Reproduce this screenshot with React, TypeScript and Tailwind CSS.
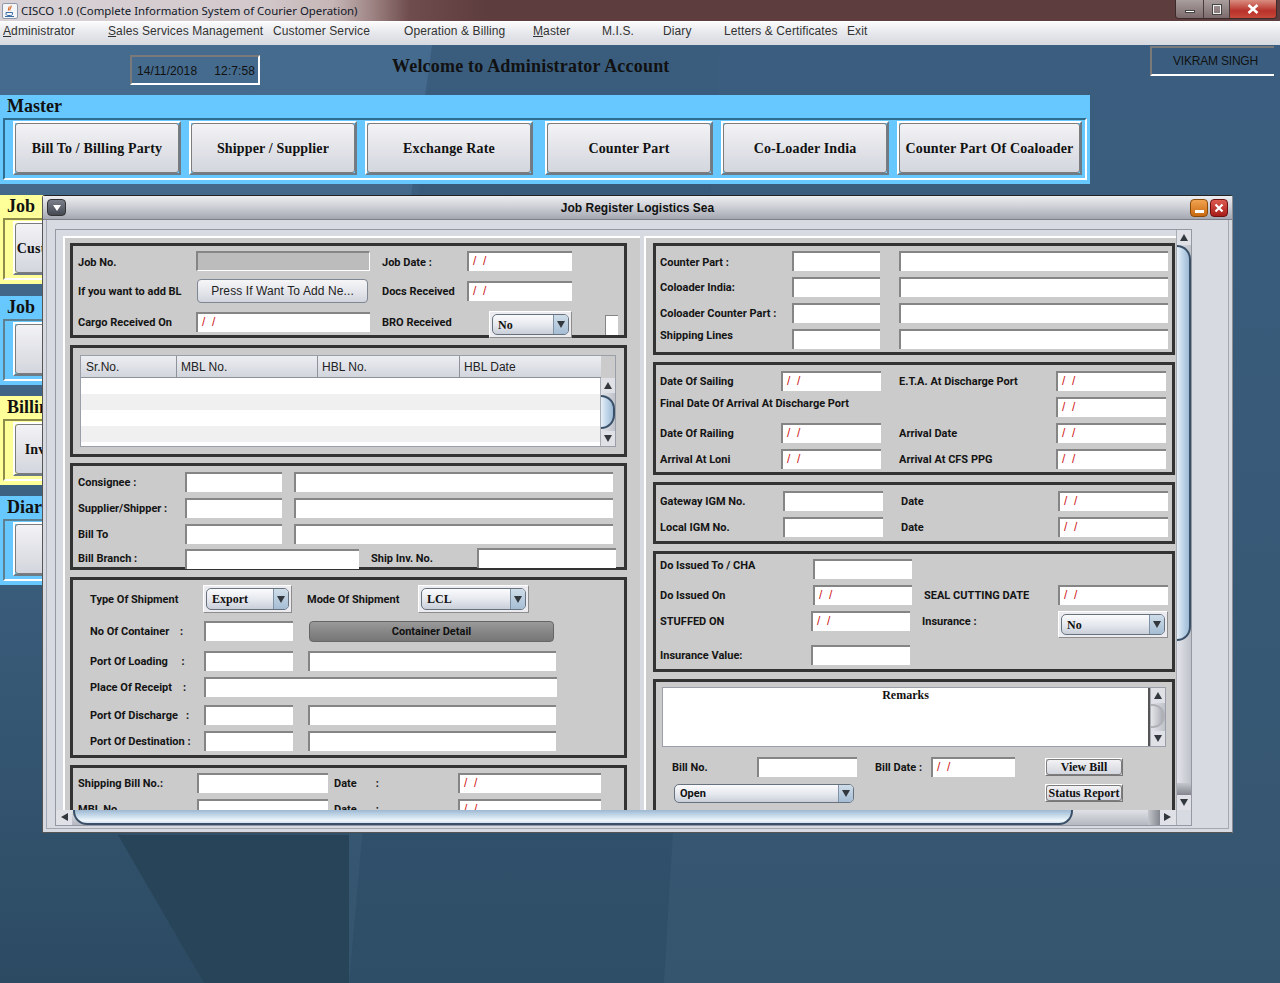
// CISCO 1.0 - Job Register Logistics Sea
import type { ReactNode } from 'react'

const chrome = "font-['Liberation_Sans',Arial,sans-serif]"
const serif = "font-['Liberation_Serif','Times_New_Roman',serif]"

function Tri({ dir = 'down', className = '' }: { dir?: 'up' | 'down' | 'left' | 'right'; className?: string }) {
  const pts = { up: '4,1 8,8 0,8', down: '0,1 8,1 4,8', left: '8,0 8,8 1,4', right: '0,0 0,8 7,4' }[dir]
  return (
    <svg viewBox="0 0 8 9" className={`w-[8px] h-[9px] ${className}`}>
      <polygon points={pts} fill="#33383f" />
    </svg>
  )
}

function Label({ className = '', children }: { className?: string; children: ReactNode }) {
  return (
    <div className={`shrink-0 h-[20px] pt-[1px] leading-[20px] whitespace-pre overflow-visible font-['Roboto',sans-serif] font-bold text-[11px] text-[#141414] ${className}`}>
      {children}
    </div>
  )
}

function Field({ className = '', date = false, grey = false }: { className?: string; date?: boolean; grey?: boolean }) {
  return (
    <div className={`shrink-0 h-[20px] border-t-2 border-l-2 border-t-[#858585] border-l-[#858585] pl-[4px] leading-[17px] whitespace-pre text-[12px] text-[#d01818] ${chrome} ${grey ? 'bg-[#bcbcbc] border-r border-b border-r-white border-b-white' : 'bg-white'} ${className}`}>
      {date ? '/  /' : ''}
    </div>
  )
}

function Select({ className = '', value }: { className?: string; value: string }) {
  return (
    <div className={`shrink-0 p-[2px] border border-t-white border-l-white border-r-[#8d8d8d] border-b-[#8d8d8d] bg-[#ececf0] ${className}`}>
      <div className="h-full flex rounded-[5px] border border-[#67727f] overflow-hidden bg-[linear-gradient(180deg,#fbfbfd_0%,#e4e7ed_55%,#c9ced8_100%)]">
        <div className={`flex-1 pl-[5px] self-center ${serif} text-[12px] font-bold text-[#111]`}>{value}</div>
        <div className="w-[15px] flex items-center justify-center border-l border-[#7f93a8] bg-[linear-gradient(180deg,#cfdde9_0%,#a5bdd4_100%)]">
          <Tri />
        </div>
      </div>
    </div>
  )
}

function SmallSelect({ className = '', value }: { className?: string; value: string }) {
  return (
    <div className={`shrink-0 flex rounded-[5px] border border-[#67727f] overflow-hidden bg-[linear-gradient(180deg,#fbfbfd_0%,#e4e7ed_55%,#c9ced8_100%)] ${className}`}>
      <div className="flex-1 pl-[5px] pt-[1px] self-center font-['Roboto',sans-serif] text-[11px] font-bold text-[#111]">{value}</div>
      <div className="w-[15px] flex items-center justify-center border-l border-[#7f93a8] bg-[linear-gradient(180deg,#cfdde9_0%,#a5bdd4_100%)]">
        <Tri />
      </div>
    </div>
  )
}

function Panel({ className = '', children }: { className?: string; children: ReactNode }) {
  return <div className={`shrink-0 border-[3px] border-[#333] bg-[#cbcbcb] ${className}`}>{children}</div>
}

function Row({ className = '', children }: { className?: string; children: ReactNode }) {
  return <div className={`flex items-start h-[20px] ${className}`}>{children}</div>
}

const blueThumb = 'border-[#3a5068] bg-[linear-gradient(90deg,#e6eff7_0%,#bcd2e6_55%,#9dbad4_100%)]'
const greyThumb = 'border-[#b0b2b8] bg-[linear-gradient(90deg,#e4e5e9_0%,#c4c6cc_60%,#a8aab1_100%)]'

function VScroll({ className = '', thumb, shade = false }: { className?: string; thumb: string; shade?: boolean }) {
  return (
    <div className={`shrink-0 w-[15px] flex flex-col bg-[linear-gradient(90deg,#e2e4ea_0%,#bfc2c9_100%)] border-l border-[#a9adb6] ${className}`}>
      <div className="h-[15px] flex items-center justify-center bg-[#dfe1e7]"><Tri dir="up" /></div>
      <div className={`shrink-0 rounded-r-[14px] border-r-2 border-t-2 border-b-2 ${thumb}`} />
      <div className="flex-1" />
      {shade && <div className="h-[12px] bg-[linear-gradient(180deg,#c4c6cc_0%,#83868e_100%)]" />}
      <div className="h-[15px] flex items-center justify-center bg-[#dfe1e7]"><Tri /></div>
    </div>
  )
}

function FaceButton({ children }: { children: ReactNode }) {
  return (
    <div className="h-full rounded-[3px] border border-[#7c7c7c] flex items-center justify-center bg-[linear-gradient(180deg,#f3f3f6_0%,#e3e4e9_50%,#d3d6de_100%)]">
      {children}
    </div>
  )
}

function BigButton({ className = '', children }: { className?: string; children: ReactNode }) {
  return (
    <div className={`shrink-0 h-[54px] border-2 border-t-white border-l-white border-r-[#6e7a86] border-b-[#6e7a86] ${serif} font-bold text-[14px] tracking-[0.15px] text-[#111] whitespace-nowrap ${className}`}>
      <FaceButton>{children}</FaceButton>
    </div>
  )
}

function SideGroup({ title, button, yellow = false, className = '' }: { title: string; button: string; yellow?: boolean; className?: string }) {
  return (
    <div className={`w-[400px] h-[89px] flex flex-col ${yellow ? 'bg-[#ffff99]' : 'bg-[#66c8ff]'} ${className}`}>
      <div className={`h-[23px] pl-[7px] leading-[23px] ${serif} font-bold text-[18px] text-[#111]`}>{title}</div>
      <div className={`mx-[3px] h-[62px] border-2 border-t-[#5d7f8f] border-l-[#5d7f8f] border-r-white border-b-white pl-[8px] pt-[1px] ${yellow ? 'border-t-[#8c8c4a] border-l-[#8c8c4a]' : ''}`}>
        <BigButton className="w-[68px]">{button}</BigButton>
      </div>
    </div>
  )
}

const menu = [
  { text: 'Administrator', u: true, cls: 'w-[105px]' },
  { text: 'Sales Services Management', u: true, cls: 'w-[165px]' },
  { text: 'Customer Service', u: false, cls: 'w-[131px]' },
  { text: 'Operation & Billing', u: false, cls: 'w-[129px]' },
  { text: 'Master', u: true, cls: 'w-[69px]' },
  { text: 'M.I.S.', u: false, cls: 'w-[61px]' },
  { text: 'Diary', u: false, cls: 'w-[61px]' },
  { text: 'Letters & Certificates', u: false, cls: 'w-[123px]' },
  { text: 'Exit', u: false, cls: 'w-[40px]' },
]

function LeftColumn() {
  return (
    <div className="w-[577px] shrink-0 border-l-2 border-t-2 border-white bg-[#cbcbcb] pl-[5px] pt-[5px]">
      <Panel className="w-[557px] h-[95px] pl-[5px] pt-[5px]">
        <Row>
          <Label className="w-[118px] mt-[1px]">Job No.</Label>
          <Field grey className="w-[174px]" />
          <Label className="ml-[12px] w-[85px] mt-[1px]">Job Date :</Label>
          <Field date className="w-[105px]" />
        </Row>
        <div className="flex items-center h-[24px] mt-[8px]">
          <Label className="w-[119px]">If you want to add BL</Label>
          <div className={`w-[171px] h-[24px] rounded-[4px] border border-[#7f8792] flex items-center justify-center text-[12px] tracking-[0.1px] text-[#222] ${chrome} bg-[linear-gradient(180deg,#f6f6f8_0%,#e6e7ec_50%,#d2d5dd_100%)]`}>
            Press If Want To Add Ne...
          </div>
          <Label className="ml-[14px] w-[85px]">Docs Received</Label>
          <Field date className="w-[105px]" />
        </div>
        <Row className="mt-[8px]">
          <Label className="w-[118px] mt-[1px]">Cargo Received On</Label>
          <Field date className="w-[174px] mt-[1px]" />
          <Label className="ml-[12px] w-[107px] mt-[1px]">BRO Received</Label>
          <Select value="No" className="w-[83px] h-[27px]" />
          <div className="ml-[33px] mt-[4px] w-[13px] h-[20px] bg-white border-t border-l border-[#858585]" />
        </Row>
      </Panel>

      <Panel className="mt-[7px] w-[557px] h-[112px] pl-[7px] pt-[7px]">
        <div className="w-[536px] h-[92px] border border-[#9a9ea8] flex flex-col">
          <div className={`h-[22px] shrink-0 flex text-[12px] text-[#222] ${chrome}`}>
            <div className="w-[96px] pl-[5px] leading-[23px] border-r border-b border-[#8e929b] bg-[linear-gradient(180deg,#eceef2_0%,#d2d5dc_100%)]">Sr.No.</div>
            <div className="w-[141px] pl-[4px] leading-[23px] border-r border-b border-[#8e929b] bg-[linear-gradient(180deg,#eceef2_0%,#d2d5dc_100%)]">MBL No.</div>
            <div className="w-[142px] pl-[4px] leading-[23px] border-r border-b border-[#8e929b] bg-[linear-gradient(180deg,#eceef2_0%,#d2d5dc_100%)]">HBL No.</div>
            <div className="w-[141px] pl-[4px] leading-[23px] border-b border-[#8e929b] bg-[linear-gradient(180deg,#eceef2_0%,#d2d5dc_100%)]">HBL Date</div>
            <div className="flex-1 bg-[#cbcbcb]" />
          </div>
          <div className="flex flex-1 min-h-0">
            <div className="flex-1 bg-white">
              <div className="h-[16px]" />
              <div className="h-[16px] bg-[#f0f0f0]" />
              <div className="h-[16px]" />
              <div className="h-[16px] bg-[#f0f0f0]" />
            </div>
            <VScroll thumb={`h-[34px] mt-[2px] ${blueThumb}`} />
          </div>
        </div>
      </Panel>

      <Panel className="mt-[6px] w-[557px] h-[107px] pl-[5px] pt-[6px]">
        <Row>
          <Label className="w-[107px]">Consignee :</Label>
          <Field className="w-[97px]" />
          <Field className="ml-[12px] w-[319px]" />
        </Row>
        <Row className="mt-[6px]">
          <Label className="w-[107px]">Supplier/Shipper :</Label>
          <Field className="w-[97px]" />
          <Field className="ml-[12px] w-[319px]" />
        </Row>
        <Row className="mt-[6px]">
          <Label className="w-[107px]">Bill To</Label>
          <Field className="w-[97px]" />
          <Field className="ml-[12px] w-[319px]" />
        </Row>
        <Row className="mt-[5px]">
          <Label className="w-[107px] -mt-[1px] mb-[1px]">Bill Branch :</Label>
          <Field className="w-[174px]" />
          <Label className="ml-[12px] w-[106px] -mt-[1px] mb-[1px]">Ship Inv. No.</Label>
          <Field className="w-[139px] -mt-[1px]" />
        </Row>
      </Panel>

      <Panel className="mt-[7px] w-[557px] h-[181px] pl-[17px] pt-[5px]">
        <div className="flex items-center h-[28px]">
          <Label className="w-[113px]">Type Of Shipment</Label>
          <Select value="Export" className="w-[89px] h-[28px]" />
          <Label className="ml-[15px] w-[111px]">Mode Of Shipment</Label>
          <Select value="LCL" className="w-[111px] h-[28px]" />
        </div>
        <Row className="mt-[8px]">
          <Label className="w-[114px]">{'No Of Container    :'}</Label>
          <Field className="w-[89px]" />
          <div className="ml-[16px] w-[245px] h-[21px] pt-[1px] rounded-[4px] border border-[#666] flex items-center justify-center font-['Roboto',sans-serif] font-bold text-[11px] text-[#111] bg-[linear-gradient(180deg,#9a9a9a_0%,#838383_60%,#777_100%)]">
            Container Detail
          </div>
        </Row>
        <Row className="mt-[10px]">
          <Label className="w-[114px]">{'Port Of Loading     :'}</Label>
          <Field className="w-[89px]" />
          <Field className="ml-[15px] w-[248px]" />
        </Row>
        <Row className="mt-[6px]">
          <Label className="w-[114px]">{'Place Of Receipt    :'}</Label>
          <Field className="w-[353px]" />
        </Row>
        <Row className="mt-[8px]">
          <Label className="w-[114px]">{'Port Of Discharge   :'}</Label>
          <Field className="w-[89px]" />
          <Field className="ml-[15px] w-[248px]" />
        </Row>
        <Row className="mt-[6px]">
          <Label className="w-[114px]">Port Of Destination :</Label>
          <Field className="w-[89px]" />
          <Field className="ml-[15px] w-[248px]" />
        </Row>
      </Panel>

      <Panel className="mt-[7px] w-[557px] h-[90px] pl-[5px] pt-[5px]">
        <Row>
          <Label className="w-[119px]">Shipping Bill No.:</Label>
          <Field className="w-[131px]" />
          <Label className="ml-[6px] w-[124px]">{'Date       :'}</Label>
          <Field date className="w-[143px]" />
        </Row>
        <Row className="mt-[6px]">
          <Label className="w-[119px]">MBL No.</Label>
          <Field className="w-[131px]" />
          <Label className="ml-[6px] w-[124px]">{'Date       :'}</Label>
          <Field date className="w-[143px]" />
        </Row>
      </Panel>
    </div>
  )
}

function RightColumn() {
  return (
    <div className="ml-[4px] flex-1 border-l-2 border-t-2 border-white bg-[#cbcbcb] pl-[7px] pt-[5px]">
      <Panel className="w-[522px] h-[112px] pl-[4px] pt-[5px]">
        <Row>
          <Label className="w-[132px] mt-[1px]">Counter Part :</Label>
          <Field className="w-[88px]" />
          <Field className="ml-[19px] w-[269px]" />
        </Row>
        <Row className="mt-[6px]">
          <Label className="w-[132px]">Coloader India:</Label>
          <Field className="w-[88px]" />
          <Field className="ml-[19px] w-[269px]" />
        </Row>
        <Row className="mt-[6px]">
          <Label className="w-[132px]">Coloader Counter Part :</Label>
          <Field className="w-[88px]" />
          <Field className="ml-[19px] w-[269px]" />
        </Row>
        <Row className="mt-[6px]">
          <Label className="w-[132px] -mt-[4px] mb-[4px]">Shipping Lines</Label>
          <Field className="w-[88px]" />
          <Field className="ml-[19px] w-[269px]" />
        </Row>
      </Panel>

      <Panel className="mt-[7px] w-[522px] h-[113px] pl-[4px] pt-[6px]">
        <Row>
          <Label className="w-[121px]">Date Of Sailing</Label>
          <Field date className="w-[100px]" />
          <Label className="ml-[18px] w-[157px]">E.T.A. At Discharge Port</Label>
          <Field date className="w-[110px]" />
        </Row>
        <Row className="mt-[6px]">
          <Label className="w-[396px] -mt-[4px]">Final Date Of Arrival At Discharge Port</Label>
          <Field date className="w-[110px]" />
        </Row>
        <Row className="mt-[6px]">
          <Label className="w-[121px]">Date Of Railing</Label>
          <Field date className="w-[100px]" />
          <Label className="ml-[18px] w-[157px]">Arrival Date</Label>
          <Field date className="w-[110px]" />
        </Row>
        <Row className="mt-[6px]">
          <Label className="w-[121px]">Arrival At Loni</Label>
          <Field date className="w-[100px]" />
          <Label className="ml-[18px] w-[157px]">Arrival At CFS PPG</Label>
          <Field date className="w-[110px]" />
        </Row>
      </Panel>

      <Panel className="mt-[7px] w-[522px] h-[62px] pl-[4px] pt-[6px]">
        <Row>
          <Label className="w-[123px]">Gateway IGM No.</Label>
          <Field className="w-[100px]" />
          <Label className="ml-[18px] w-[157px]">Date</Label>
          <Field date className="w-[110px]" />
        </Row>
        <Row className="mt-[6px]">
          <Label className="w-[123px]">Local IGM No.</Label>
          <Field className="w-[100px]" />
          <Label className="ml-[18px] w-[157px]">Date</Label>
          <Field date className="w-[110px]" />
        </Row>
      </Panel>

      <Panel className="mt-[7px] w-[522px] h-[121px] pl-[4px] pt-[5px]">
        <Row>
          <Label className="w-[153px] -mt-[4px]">Do Issued To / CHA</Label>
          <Field className="w-[99px]" />
        </Row>
        <Row className="mt-[6px]">
          <Label className="w-[153px]">Do Issued On</Label>
          <Field date className="w-[99px]" />
          <Label className="ml-[12px] w-[134px]">SEAL CUTTING DATE</Label>
          <Field date className="w-[110px]" />
        </Row>
        <Row className="mt-[6px]">
          <Label className="w-[151px]">STUFFED ON</Label>
          <Field date className="w-[99px]" />
          <Label className="ml-[12px] w-[136px]">Insurance :</Label>
          <Select value="No" className="w-[110px] h-[27px]" />
        </Row>
        <Row className="mt-[14px]">
          <Label className="w-[151px]">Insurance Value:</Label>
          <Field className="w-[99px]" />
        </Row>
      </Panel>

      <Panel className="mt-[7px] w-[522px] h-[150px] pl-[6px] pt-[5px]">
        <div className="w-[504px] h-[60px] border border-[#9a9ea8] bg-white flex">
          <div className={`flex-1 border-r-2 border-[#555] text-center ${serif} font-bold text-[12px] leading-[14px] text-[#111]`}>Remarks</div>
          <VScroll thumb={`h-[24px] mt-[1px] ${greyThumb}`} />
        </div>
        <Row className="mt-[10px]">
          <Label className="ml-[10px] w-[85px]">Bill No.</Label>
          <Field className="w-[100px]" />
          <Label className="ml-[18px] w-[56px]">Bill Date :</Label>
          <Field date className="w-[84px]" />
          <div className={`ml-[30px] mt-[1px] w-[78px] h-[18px] border border-t-white border-l-white border-r-[#777] border-b-[#777] ${serif} font-bold text-[12px] text-[#111]`}>
            <FaceButton>View Bill</FaceButton>
          </div>
        </Row>
        <Row className="mt-[7px]">
          <SmallSelect value="Open" className="ml-[12px] w-[180px] h-[19px]" />
          <div className={`ml-[191px] w-[78px] h-[18px] border border-t-white border-l-white border-r-[#777] border-b-[#777] ${serif} font-bold text-[12px] text-[#111] whitespace-nowrap`}>
            <FaceButton>Status Report</FaceButton>
          </div>
        </Row>
      </Panel>
    </div>
  )
}

function InternalWindow() {
  return (
    <div className="absolute z-10 left-[42px] top-[150px] w-[1191px] h-[638px] flex flex-col border border-[#555] border-t-[#222] border-r-[#8a8d95] border-b-[#555] bg-[#d7dae1] rounded-t-[3px]">
      <div className="h-[24px] shrink-0 flex items-center pl-[4px] pr-[4px] border-b border-[#7d8089] bg-[linear-gradient(180deg,#eceef1_0%,#c8cad1_55%,#a4a7b1_100%)]">
        <div className="w-[19px] h-[17px] rounded-[4px] border border-[#333] bg-[linear-gradient(180deg,#7b7f8a_0%,#454954_100%)] flex items-center justify-center">
          <svg viewBox="0 0 8 6" className="w-[8px] h-[6px]"><polygon points="0,0 8,0 4,6" fill="#fff" /></svg>
        </div>
        <div className={`flex-1 text-center pl-[19px] ${chrome} font-bold text-[12px] text-[#111]`}>Job Register Logistics Sea</div>
        <div className="w-[18px] h-[18px] rounded-[4px] border border-[#8a4a0a] bg-[linear-gradient(180deg,#f2a350_0%,#c86a12_100%)] flex items-end justify-center pb-[3px]">
          <div className="w-[9px] h-[3px] bg-white" />
        </div>
        <div className="ml-[2px] w-[18px] h-[18px] rounded-[4px] border border-[#6e0f0f] bg-[linear-gradient(180deg,#dc5a50_0%,#a81c18_100%)] flex items-center justify-center">
          <svg viewBox="0 0 10 10" className="w-[10px] h-[10px]"><path d="M1.5 1.5 L8.5 8.5 M8.5 1.5 L1.5 8.5" stroke="#fff" strokeWidth="2.2" /></svg>
        </div>
      </div>
      <div className="flex-1 min-h-0 pl-[3px] pr-[3px] pb-[3px]">
        <div className="h-full border border-t-0 border-[#a5a8b1] pl-[8px] pt-[9px]">
          <div className="w-[1137px] h-[597px] border border-[#9498a2] flex flex-col bg-[#d7dae1]">
            <div className="h-[580px] flex shrink-0">
              <div className="w-[1121px] h-[580px] overflow-hidden pl-[7px] pt-[6px] flex">
                <LeftColumn />
                <RightColumn />
              </div>
              <VScroll shade thumb={`h-[396px] ${blueThumb}`} />
            </div>
            <div className="flex-1 flex bg-[linear-gradient(180deg,#dfe1e6_0%,#b5b8c0_100%)]">
              <div className="w-[16px] flex items-center justify-center bg-[#dfe1e7]"><Tri dir="left" /></div>
              <div className="ml-[1px] w-[1000px] rounded-b-[14px] border-b-2 border-l-2 border-r-2 border-[#3a5068] bg-[linear-gradient(180deg,#9db8d2_0%,#c8dbea_45%,#eef6fb_80%,#d5e3ef_100%)]" />
              <div className="flex-1" />
              <div className="w-[12px] bg-[linear-gradient(90deg,#c4c6cc_0%,#83868e_100%)]" />
              <div className="w-[16px] flex items-center justify-center bg-[#dfe1e7]"><Tri dir="right" /></div>
              <div className="w-[15px] bg-[#d7dae1] border-l border-[#a9adb6]" />
            </div>
          </div>
        </div>
      </div>
    </div>
  )
}

function Wallpaper() {
  return (
    <svg viewBox="0 0 1280 938" className="absolute inset-0 w-[1280px] h-[938px]" preserveAspectRatio="none">
      <defs>
        <linearGradient id="base" x1="0" y1="0" x2="0" y2="1">
          <stop offset="0" stopColor="#3b5e80" />
          <stop offset="1" stopColor="#35556e" />
        </linearGradient>
        <linearGradient id="leftside" x1="0" y1="0" x2="0" y2="1">
          <stop offset="0" stopColor="#456b8e" />
          <stop offset="0.4" stopColor="#3f6485" />
          <stop offset="1" stopColor="#2c4a62" />
        </linearGradient>
        <linearGradient id="mid" x1="0" y1="0" x2="0" y2="1">
          <stop offset="0" stopColor="#3a5d7e" />
          <stop offset="1" stopColor="#2e4e67" />
        </linearGradient>
      </defs>
      <rect width="1280" height="938" fill="url(#base)" />
      <polygon points="432,0 720,0 664,938 349,938" fill="url(#mid)" />
      <polygon points="0,0 432,0 349,600 349,938 0,938" fill="url(#leftside)" />
      <polygon points="118,790 349,790 349,938 204,938" fill="#284459" />
    </svg>
  )
}

export default function App() {
  return (
    <div className={`w-[1280px] h-[983px] overflow-hidden flex flex-col ${chrome}`}>
      <div className="h-[22px] shrink-0 flex items-start border-b border-white bg-[linear-gradient(90deg,#d8d2d6_0%,#d3c9cc_20%,#c6b6b6_26%,#9f8585_29%,#6f4c4d_32%,#5e3d3f_38%,#5e3d3f_100%)]">
        <svg viewBox="0 0 16 16" className="mt-[3px] ml-[2px] w-[16px] h-[16px] shrink-0">
          <rect x="0.5" y="0.5" width="15" height="15" rx="1.5" fill="#f3f5f8" stroke="#8d99aa" />
          <path d="M9 2.5c1 2-2 3-1 5M7 3.5c.5 1.500-1 2-.5 4" stroke="#d9661f" strokeWidth="1.1" fill="none" />
          <path d="M4 9.500h6.500v1.500c0 1-1 1.500-2 1.500H6c-1 0-2-.5-2-1.500zM3 13.500h9" stroke="#3a6ea5" strokeWidth="1" fill="none" />
        </svg>
        <div className="ml-[3px] mt-[2px] font-['Noto_Sans',sans-serif] text-[11.4px] leading-[18px] text-[#101828] whitespace-nowrap">
          CISCO 1.0 (Complete Information System of Courier Operation)
        </div>
        <div className="ml-auto mr-[3px] flex h-[19px] rounded-b-[4px] border border-t-0 border-[#3d2a2b] overflow-hidden">
          <div className="w-[28px] flex items-center justify-center bg-[linear-gradient(180deg,#a99d9e_0%,#7c6b6c_100%)] border-r border-[#4a3a3a]">
            <div className="w-[10px] h-[3px] mt-[4px] bg-white border border-[#444]" />
          </div>
          <div className="w-[26px] flex items-center justify-center bg-[linear-gradient(180deg,#a99d9e_0%,#7c6b6c_100%)] border-r border-[#4a3a3a]">
            <div className="w-[8px] h-[9px] border border-[#f0f0f0] outline outline-[#444]" />
          </div>
          <div className="w-[46px] flex items-center justify-center bg-[linear-gradient(180deg,#d98d80_0%,#b8322a_60%,#c9473a_100%)]">
            <svg viewBox="0 0 12 10" className="w-[12px] h-[10px]"><path d="M1.500 1 L10.500 9 M10.500 1 L1.500 9" stroke="#fff" strokeWidth="2.600" /></svg>
          </div>
        </div>
      </div>

      <div className="h-[23px] shrink-0 flex items-center pl-[3px] pb-[5px] text-[12px] tracking-[0.1px] text-[#333] bg-[linear-gradient(180deg,#fbfbfc_0%,#e8e9ed_45%,#d6d9df_100%)]">
        {menu.map((m) => (
          <div key={m.text} className={`shrink-0 whitespace-nowrap ${m.cls}`}>
            {m.u ? <><u>{m.text[0]}</u>{m.text.slice(1)}</> : m.text}
          </div>
        ))}
      </div>

      <div className="relative flex-1 min-h-0 overflow-hidden">
        <Wallpaper />
        <div className="relative">
          <div className="h-[50px] flex items-start">
            <div className="ml-[130px] mt-[10px] w-[130px] h-[30px] border-2 border-t-[#7a7a7a] border-l-[#7a7a7a] border-r-white border-b-white pl-[5px] leading-[28px] text-[12px] tracking-[0.1px] text-[#111] whitespace-pre">
              {'14/11/2018     12:7:58'}
            </div>
            <div className={`ml-[132px] mt-[10px] ${serif} font-bold text-[18px] tracking-[0.2px] leading-[22px] text-[#111]`}>Welcome to Administrator Account</div>
            <div className="ml-auto mr-[6px] mt-[1px] w-[124px] h-[30px] pl-[5px] border-t-2 border-l-2 border-b-2 border-t-[#7a7a7a] border-l-[#7a7a7a] border-b-white text-center leading-[26px] text-[12px] tracking-[-0.2px] text-[#111]">
              VIKRAM SINGH
            </div>
          </div>

          <div className="w-[1090px] h-[89px] bg-[#66c8ff] flex flex-col">
            <div className={`h-[23px] pl-[7px] leading-[23px] ${serif} font-bold text-[18px] text-[#111]`}>Master</div>
            <div className="mx-[3px] h-[62px] flex border-2 border-t-[#2f6d8f] border-l-[#2f6d8f] border-r-white border-b-white pl-[8px] pt-[1px]">
              <BigButton className="w-[168px]">Bill To / Billing Party</BigButton>
              <BigButton className="ml-[8px] w-[168px]">Shipper / Supplier</BigButton>
              <BigButton className="ml-[8px] w-[168px]">Exchange Rate</BigButton>
              <BigButton className="ml-[12px] w-[168px]">Counter Part</BigButton>
              <BigButton className="ml-[8px] w-[168px]">Co-Loader India</BigButton>
              <BigButton className="ml-[8px] w-[185px]">Counter Part Of Coaloader</BigButton>
            </div>
          </div>

          <SideGroup className="mt-[11px]" yellow title="Job" button="Customer" />
          <SideGroup className="mt-[12px]" title="Job" button="" />
          <SideGroup className="mt-[11px]" yellow title="Billing" button="Invoice" />
          <SideGroup className="mt-[11px]" title="Diary" button="" />
        </div>

        <InternalWindow />
      </div>
    </div>
  )
}
